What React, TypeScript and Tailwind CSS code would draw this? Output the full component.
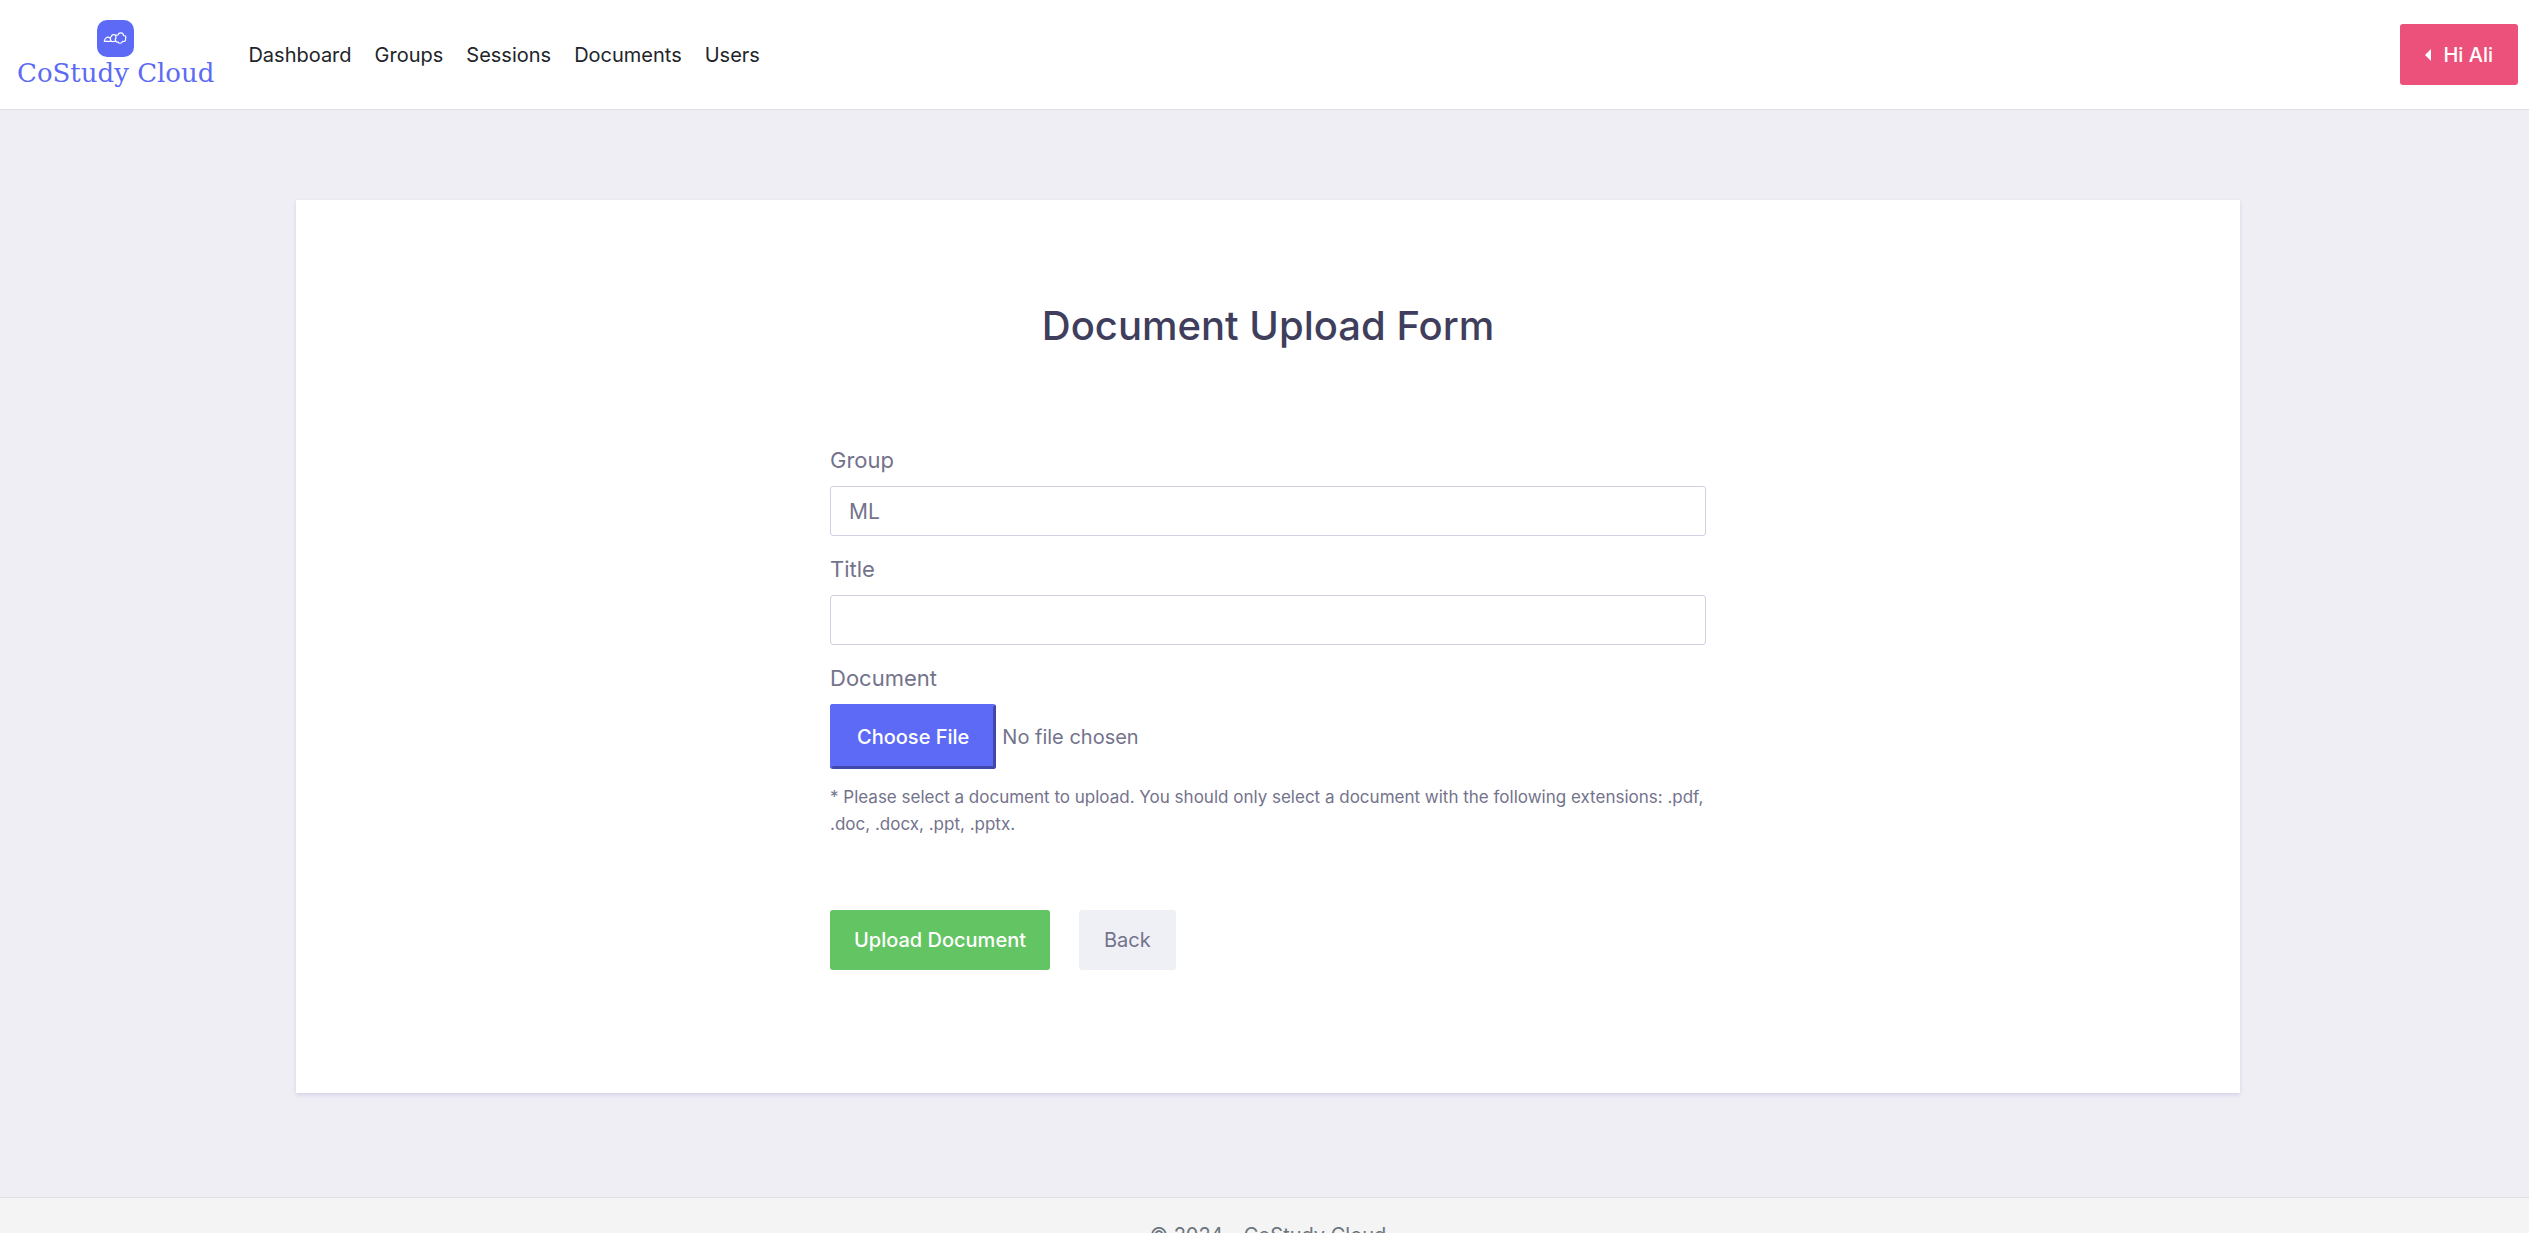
const navLinks = ["Dashboard", "Groups", "Sessions", "Documents", "Users"];

function Logo() {
  return (
    <a href="#" className="flex flex-col items-center text-[#5c6af6]">
      <svg width="37" height="37" viewBox="0 0 37 37" fill="none" aria-hidden="true">
        <rect width="37" height="37" rx="10" fill="currentColor" />
        <path
          d="M7.300 21.300H14.500M7.300 21.300C7.500 18 10.500 16 13 18M14.500 21.300C12.800 19.500 13 17 14.500 16.500C14.500 14.500 17.500 14 19 15.500M14.500 21.300C16 22 17.500 21.500 18.700 20.700C19 22 20 22.500 21 22C22 24 25 23.500 25.500 21.300C27.500 22 29.300 20.500 28.500 18.800C29.500 17 28.500 15.300 26.500 15.500C26.500 12 21.500 12 21 15C19 14.800 18 16.500 19.200 18C18 19 18 20 18.700 20.700"
          stroke="white"
          strokeWidth="1.200"
          strokeLinecap="round"
          strokeLinejoin="round"
        />
      </svg>
      <span className="font-['DejaVu_Serif',serif] text-[26px] leading-[33px]">CoStudy Cloud</span>
    </a>
  );
}

function TextField({ id, label, value }: { id: string; label: string; value?: string }) {
  return (
    <div className="mb-4">
      <label htmlFor={id} className="mb-2 block text-[22px] leading-[35px]">
        {label}
      </label>
      <input
        id={id}
        type="text"
        defaultValue={value}
        className="block h-[50px] w-full rounded-[3px] border border-[#d1cfe2] bg-white px-[18px] text-[21px] outline-none"
      />
    </div>
  );
}

export default function App() {
  return (
    <div className="h-screen overflow-hidden bg-[#efeef5] font-[Inter,sans-serif] text-[#73738c]">
      <header className="flex h-[110px] items-center justify-between border-b border-[#dedee6] bg-white pr-[11px] pl-[17px]">
        <div className="flex items-center">
          <Logo />
          <nav className="ml-[34px] flex gap-[23px] text-xl text-[#212529]">
            {navLinks.map((name) => (
              <a key={name} href="#">
                {name}
              </a>
            ))}
          </nav>
        </div>
        <button
          type="button"
          className="flex h-[61px] items-center gap-3 rounded-[3px] bg-[#ec517c] px-[25px] text-xl font-medium text-white"
        >
          <svg width="6" height="12" viewBox="0 0 6 12" fill="currentColor" aria-hidden="true">
            <path d="M6 0V12L0 6Z" />
          </svg>
          Hi Ali
        </button>
      </header>

      <main className="pt-[90px] pr-[289px] pb-[104px] pl-[296px]">
        <section className="bg-white pt-[98px] pb-[123px] shadow-[0_2px_4px_#d3d2e6]">
          <h1 className="text-center text-[40px] leading-[56px] font-medium text-[#3f3e5c]">
            Document Upload Form
          </h1>
          <form className="mx-auto mt-[89px] w-full max-w-[876px]">
            <TextField id="group" label="Group" value="ML" />
            <TextField id="title" label="Title" />
            <label htmlFor="document" className="mb-2 block text-[22px] leading-[35px]">
              Document
            </label>
            <input
              id="document"
              type="file"
              className="block w-full text-xl file:mr-1.5 file:h-[65px] file:rounded-[3px] file:border-3 file:border-[#5c6af6] file:border-r-[#4048aa] file:border-b-[#4048aa] file:bg-[#5c6af6] file:px-6 file:font-medium file:text-white"
            />
            <p className="mt-[15px] text-[17px] leading-[27px]">
              * Please select a document to upload. You should only select a document with the following
              extensions: .pdf, .doc, .docx, .ppt, .pptx.
            </p>
            <div className="mt-[72px] flex gap-[29px] text-xl">
              <button type="submit" className="h-[60px] rounded-[3px] bg-[#62c462] px-6 font-medium text-white">
                Upload Document
              </button>
              <button type="button" className="h-[60px] rounded-[3px] bg-[#eff0f6] px-[25px]">
                Back
              </button>
            </div>
          </form>
        </section>
      </main>

      <footer className="border-t border-[#dedee3] bg-[#f4f4f4] py-[22px] pl-[7px] text-center text-xl leading-[30px] text-[#6c757d]">
        © 2024 - CoStudy Cloud
      </footer>
    </div>
  );
}
